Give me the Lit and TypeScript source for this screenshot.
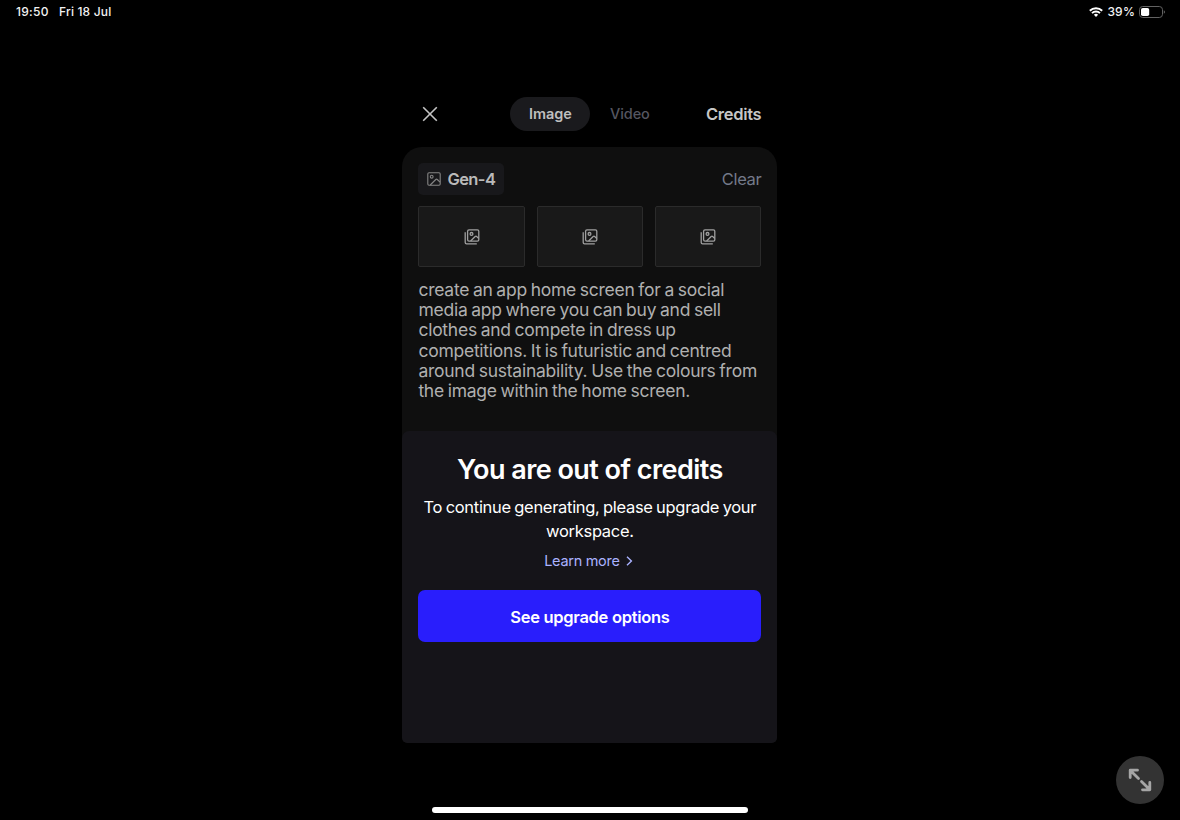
import {LitElement, html, css, svg} from 'lit';
import {customElement, property} from 'lit/decorators.js';

@customElement('status-bar')
export class StatusBar extends LitElement {
    @property({type: String}) time = '19:50';
    @property({type: String}) date = 'Fri 18 Jul';
    @property({type: Number}) battery = 39;

    static styles = css`
        :host {
            display: flex;
            align-items: center;
            justify-content: space-between;
            height: 24px;
            padding: 0 15px 0 16px;
            color: #f2f2f2;
            font-size: 12px;
            font-weight: 500;
            line-height: 24px;
        }

        .side {
            display: flex;
            align-items: center;
        }

        .time {
            width: 43px;
            letter-spacing: 0.27px;
        }

        .date {
            letter-spacing: 0.17px;
        }

        .percent {
            margin: 0 4px;
            letter-spacing: 0.2px;
        }

        svg {
            display: block;
        }
    `;

    render() {
        const fill = 21 * this.battery / 100;
        return html`
            <div class="side">
                <span class="time">${this.time}</span>
                <span class="date">${this.date}</span>
            </div>
            <div class="side">
                <svg width="14" height="10" viewBox="0 0 14 10" fill="none" stroke="#fff" stroke-width="1.9">
                    <path d="M.8 3.7a8.9 8.9 0 0 1 12.4 0"/>
                    <path d="M3 6.1a5.7 5.7 0 0 1 8 0"/>
                    <path d="M7 9.9 4.9 7.8a3 3 0 0 1 4.2 0z" fill="#fff" stroke="none"/>
                </svg>
                <span class="percent">${this.battery}%</span>
                <svg width="26" height="12" viewBox="0 0 26 12">
                    <rect x=".5" y=".5" width="23" height="11" rx="3.2" fill="none" stroke="#626262"/>
                    <rect x="2" y="2" width=${fill} height="8" rx="1.8" fill="#fff"/>
                    <path d="M24.8 4.2a2 2 0 0 1 0 3.6z" fill="#6a6a6a"/>
                </svg>
            </div>
        `;
    }
}

@customElement('prompt-panel')
export class PromptPanel extends LitElement {
    static styles = css`
        :host {
            display: block;
            height: 284px;
            box-sizing: border-box;
            padding: 16px 16px 0;
        }

        .bar {
            display: flex;
            align-items: center;
            justify-content: space-between;
            height: 32px;
        }

        .model {
            display: flex;
            align-items: center;
            gap: 6px;
            box-sizing: border-box;
            width: 86px;
            height: 32px;
            padding-left: 9px;
            border-radius: 5px;
            background: #18181b;
            color: #bababa;
            font-size: 16.5px;
            font-weight: 600;
            letter-spacing: -0.6px;
            white-space: nowrap;
        }

        .clear {
            color: #747a8a;
            font-size: 16.5px;
            letter-spacing: -0.35px;
        }

        .slots {
            display: grid;
            grid-template-columns: repeat(3, 1fr);
            gap: 12px;
            margin-top: 11px;
        }

        .slot {
            display: flex;
            align-items: center;
            justify-content: center;
            box-sizing: border-box;
            height: 61px;
            border: 1px solid #2b2b2b;
            border-radius: 2px;
            background: #191919;
        }

        .prompt {
            margin: 13px 0 0;
            color: #b0b0b0;
            font-size: 17.5px;
            line-height: 20.2px;
            letter-spacing: -0.25px;
            word-spacing: -0.9px;
            white-space: nowrap;
        }

        svg {
            display: block;
        }
    `;

    private lines = [
        'create an app home screen for a social',
        'media app where you can buy and sell',
        'clothes and compete in dress up',
        'competitions. It is futuristic and centred',
        'around sustainability. Use the colours from',
        'the image within the home screen.',
    ];

    private slotIcon() {
        return html`
            <svg width="16" height="16" viewBox="0 0 16 16" fill="none" stroke="#a0a0a0" stroke-width="1.3">
                ${svg`
                    <rect x="3.6" y=".9" width="11.2" height="11.2" rx="1.4"/>
                    <circle cx="7.5" cy="4.9" r="1.4"/>
                    <path d="m6.6 12 4.6-4.5c.5-.5 1-.5 1.5 0l2.1 2"/>
                    <path d="M1.2 3.2v10.2c0 .8.5 1.4 1.4 1.4h10.2"/>
                `}
            </svg>
        `;
    }

    render() {
        return html`
            <div class="bar">
                <div class="model">
                    <svg width="14" height="14" viewBox="0 0 14 14" fill="none" stroke="#858585" stroke-width="1.1">
                        <rect x=".8" y=".8" width="12.4" height="12.4" rx="1.2"/>
                        <circle cx="4.7" cy="4.7" r="1.4"/>
                        <path d="m3.2 13 5.6-5.5c.5-.5 1-.5 1.5 0l2.7 2.6"/>
                    </svg>
                    <span>Gen-4</span>
                </div>
                <span class="clear">Clear</span>
            </div>
            <div class="slots">
                ${[0, 1, 2].map(() => html`
                    <div class="slot">${this.slotIcon()}</div>`)}
            </div>
            <p class="prompt">${this.lines.map((line) => html`${line}<br>`)}</p>
        `;
    }
}

@customElement('credits-sheet')
export class CreditsSheet extends LitElement {
    static styles = css`
        :host {
            display: flex;
            flex-direction: column;
            align-items: center;
            box-sizing: border-box;
            height: 312px;
            padding: 21px 16px 0;
            border-radius: 7px 7px 5px 5px;
            background: #151419;
            color: #fff;
            text-align: center;
            white-space: nowrap;
        }

        h1 {
            margin: 0;
            font-size: 27px;
            font-weight: 600;
            line-height: 36px;
            letter-spacing: -0.54px;
        }

        p {
            margin: 7px 0 0;
            font-size: 16.5px;
            line-height: 24px;
            letter-spacing: -0.3px;
            word-spacing: -0.9px;
        }

        .more {
            display: flex;
            align-items: center;
            gap: 6px;
            margin: 8px 3px 0 0;
            color: #aab2ff;
            font-size: 14.5px;
            line-height: 20px;
            letter-spacing: -0.3px;
        }

        .upgrade {
            align-self: stretch;
            height: 52px;
            margin-top: 19px;
            padding: 1px 0 0;
            border: 0;
            border-radius: 7px;
            background: #291efc;
            color: #fff;
            font: inherit;
            font-size: 16.5px;
            font-weight: 600;
            letter-spacing: -0.3px;
        }
    `;

    render() {
        return html`
            <h1>You are out of credits</h1>
            <p>To continue generating, please upgrade your<br>workspace.</p>
            <div class="more">
                <span>Learn more</span>
                <svg width="7" height="10" viewBox="0 0 7 10" fill="none" stroke="currentColor" stroke-width="1.4">
                    <path d="m1 .8 4.4 4.2L1 9.2"/>
                </svg>
            </div>
            <button class="upgrade">See upgrade options</button>
        `;
    }
}

@customElement('app-root')
export class AppRoot extends LitElement {
    static styles = css`
        :host {
            display: block;
            position: relative;
            height: 820px;
            overflow: hidden;
            background: #000;
            font-family: Inter, 'Liberation Sans', sans-serif;
        }

        .phone {
            width: 375px;
            margin: 72.5px 0 0 402.4px;
        }

        header {
            display: grid;
            grid-template-columns: 108px 80px 79px 1fr;
            align-items: center;
            height: 34px;
            padding-right: 16px;
            margin-bottom: 16.5px;
            font-size: 15px;
            font-weight: 600;
            text-align: center;
        }

        .close {
            display: block;
            margin-left: 20px;
        }

        .tab {
            color: #555660;
            font-size: 14.5px;
            font-weight: 500;
            letter-spacing: -0.1px;
        }

        .tab.active {
            border-radius: 17px;
            background: #1a1a1d;
            color: #bfbfbf;
            font-weight: 600;
            line-height: 34px;
        }

        .credits {
            color: #c6c6c6;
            font-size: 16.5px;
            letter-spacing: -0.3px;
            text-align: right;
        }

        .card {
            overflow: hidden;
            border-radius: 20px 20px 5px 5px;
            background: #0f0f0f;
        }

        .expand {
            position: absolute;
            right: 16px;
            bottom: 16px;
            display: flex;
            align-items: center;
            justify-content: center;
            width: 48px;
            height: 48px;
            border-radius: 50%;
            background: #333;
        }

        .home {
            position: absolute;
            left: 432px;
            bottom: 7.5px;
            width: 316px;
            height: 5.5px;
            border-radius: 3px;
            background: #fff;
        }
    `;

    render() {
        return html`
            <status-bar></status-bar>
            <div class="phone">
                <header>
                    <svg class="close" width="16" height="16" viewBox="0 0 16 16" stroke="#c4c4c4" stroke-width="1.6">
                        <path d="m1.2 1.2 13.6 13.6M14.8 1.2 1.2 14.8"/>
                    </svg>
                    <span class="tab active">Image</span>
                    <span class="tab">Video</span>
                    <span class="credits">Credits</span>
                </header>
                <div class="card">
                    <prompt-panel></prompt-panel>
                    <credits-sheet></credits-sheet>
                </div>
            </div>
            <div class="expand">
                <svg width="24" height="24" viewBox="0 0 24 24" fill="none" stroke="#a6a6a6" stroke-width="2.8" stroke-linecap="round" stroke-linejoin="round">
                    <path d="M2.2 9.5V2.2h7.3M2.2 2.2l8.3 8.3M21.8 14.5v7.3h-7.3M21.8 21.8l-8.3-8.3"/>
                </svg>
            </div>
            <div class="home"></div>
        `;
    }
}
